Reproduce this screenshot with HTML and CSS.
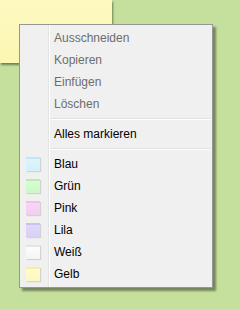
FILE: index.html
```html
<!DOCTYPE html>
<html lang="de">
<head>
    <meta charset="UTF-8">
    <title>Notizzettel</title>
    <link rel="stylesheet" href="styles.css">
</head>
<body>
    <div class="desktop">
        <div class="note"></div>

        <div class="menu">
            <div class="item disabled"><span class="icon"></span><span class="label">Ausschneiden</span></div>
            <div class="item disabled"><span class="icon"></span><span class="label">Kopieren</span></div>
            <div class="item disabled"><span class="icon"></span><span class="label">Einfügen</span></div>
            <div class="item disabled"><span class="icon"></span><span class="label">Löschen</span></div>
            <div class="separator"></div>
            <div class="item"><span class="icon"></span><span class="label">Alles markieren</span></div>
            <div class="separator"></div>
            <div class="item"><span class="icon"><span class="swatch blue"></span></span><span class="label">Blau</span></div>
            <div class="item"><span class="icon"><span class="swatch green"></span></span><span class="label">Grün</span></div>
            <div class="item"><span class="icon"><span class="swatch pink"></span></span><span class="label">Pink</span></div>
            <div class="item"><span class="icon"><span class="swatch purple"></span></span><span class="label">Lila</span></div>
            <div class="item"><span class="icon"><span class="swatch white"></span></span><span class="label">Weiß</span></div>
            <div class="item"><span class="icon"><span class="swatch yellow"></span></span><span class="label">Gelb</span></div>
        </div>
    </div>
</body>
</html>
```

FILE: styles.css
```css
/* Sticky notes desktop with context menu */
body {
    margin: 0;
    background-color: #c5df9c;
    font-family: "Liberation Sans", Arial, sans-serif;
    font-size: 12px;
}

.desktop {
    position: relative;
    width: 240px;
    height: 309px;
    overflow: hidden;
}

.note {
    position: absolute;
    left: 0;
    top: 0;
    width: 112px;
    height: 63px;
    background: linear-gradient(#fdfac0, #fcf6b2);
    box-shadow: 1px 2px 2px rgba(40, 50, 20, 0.55);
}

.menu {
    position: absolute;
    left: 19px;
    top: 24px;
    width: 192px;
    padding: 2px 0;
    background-color: #f0f0f0;
    border: 1px solid #979797;
    box-shadow: 3px 3px 2px rgba(0, 0, 0, 0.4);
    background-image: linear-gradient(to right, transparent 28px, #e2e3e3 28px, #e2e3e3 29px, #fff 29px, #fff 30px, transparent 30px);
}

.item {
    display: flex;
    align-items: center;
    height: 22px;
}

.icon {
    width: 34px;
    display: flex;
    padding-left: 6px;
    box-sizing: border-box;
}

.label {
    color: #000;
}

.disabled .label {
    color: #6d6d6d;
}

.separator {
    height: 8px;
    margin-left: 30px;
    margin-right: 1px;
    background: linear-gradient(transparent 3px, #e0e0e0 3px, #e0e0e0 4px, #fff 4px, #fff 5px, transparent 5px);
}

.swatch {
    width: 14px;
    height: 14px;
    box-sizing: border-box;
    border-top: 2px solid;
    box-shadow: 1px 1px 1px rgba(0, 0, 0, 0.12);
}

.blue {
    background: linear-gradient(#dcf5fc, #d4f0f8);
    border-top-color: #bfe6f4;
}

.green {
    background: linear-gradient(#d6fdd2, #cdf7c8);
    border-top-color: #b7ecb1;
}

.pink {
    background: linear-gradient(#f8d6f6, #f2cdf0);
    border-top-color: #eec0ec;
}

.purple {
    background: linear-gradient(#e1d9fb, #d8cff5);
    border-top-color: #cbc0f2;
}

.white {
    background: linear-gradient(#fdfdfd, #f4f4f4);
    border-top-color: #e4e4e4;
}

.yellow {
    background: linear-gradient(#fefccb, #fcf8c0);
    border-top-color: #f5ef9e;
}
```
